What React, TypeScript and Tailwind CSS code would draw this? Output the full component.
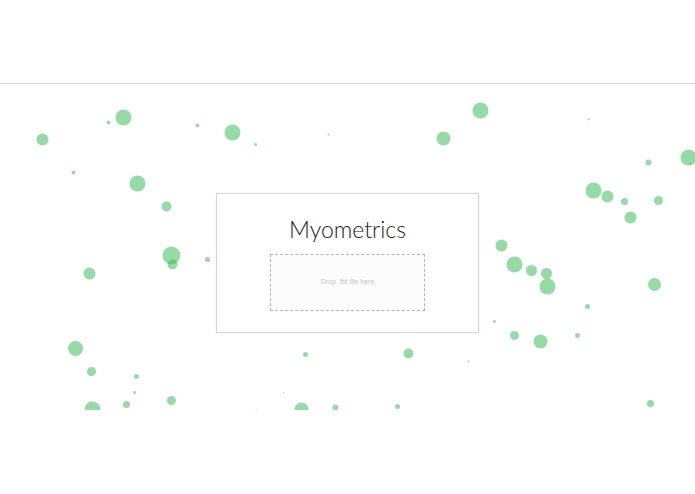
import React from "react";

const dots: [number, number, number][] = [
  [42, 139, 6], [108, 122, 2], [123, 117, 8], [73, 172, 2], [137, 183, 8],
  [197, 125, 2], [232, 132, 8], [255, 144, 1.5], [328, 134, 1],
  [480, 110, 8], [443, 138, 7], [588, 119, 1], [648, 162, 3], [688, 157, 8],
  [593, 190, 8], [607, 196, 6], [624, 201, 3.5], [658, 200, 4.5], [630, 217, 6],
  [166, 206, 5], [171, 255, 9], [172, 264, 5], [207, 259, 2.5], [89, 273, 6],
  [501, 245, 6], [514, 264, 8], [531, 270, 5.5], [546, 273, 5.5], [547, 286, 8],
  [654, 284, 6.5], [587, 306, 2.5],
  [75, 348, 7.5], [91, 371, 4.5], [136, 376, 2.5], [134, 392, 1.5], [92, 409, 8],
  [126, 404, 3.5], [171, 400, 4.5], [256, 412, 3], [283, 392, 0.6], [301, 409, 7],
  [305, 354, 2.5], [335, 407, 3],
  [494, 321, 1.5], [514, 335, 4.5], [540, 341, 7], [577, 335, 2.5], [408, 353, 5],
  [468, 361, 1], [397, 406, 2.5], [650, 403, 3.5],
];

export default function App() {
  return (
    <div className="w-[695px] h-[494px] bg-white overflow-hidden" style={{ fontFamily: "Lato, 'Open Sans', sans-serif" }}>
      <div className="h-[84px] border-b border-[#d3d3d3]" />
      <div className="relative h-[326px] overflow-hidden">
        <svg className="absolute inset-0" width="695" height="326" viewBox="-0.5 83.5 695 326">
          {dots.map(([x, y, r], i) => (
            <circle key={i} cx={x} cy={y} r={r} fill="#2bb74d" fillOpacity={0.5} />
          ))}
          <circle cx={690} cy={163} r={0.8} fill="#2a8a45" fillOpacity={0.6} />
        </svg>
        <div className="absolute inset-0 flex justify-center pt-[109px]">
          <div className="w-[263px] h-[140px] bg-white border border-[#d6d6d6] shadow-[0_0_2px_rgba(0,0,0,0.08)] flex flex-col items-center">
            <div className="mt-[20px] text-[23px] leading-[30px] font-light text-[#222]">Myometrics</div>
            <div className="mt-[10px] w-[155px] h-[57px] border border-dashed border-[#b5b5b5] bg-[#fcfcfc] flex items-center justify-center">
              <span className="text-[7px] text-[#c4c4c4]" style={{ fontFamily: "'Liberation Sans', Arial, sans-serif" }}>Drop .fbt file here</span>
            </div>
          </div>
        </div>
      </div>
    </div>
  );
}
